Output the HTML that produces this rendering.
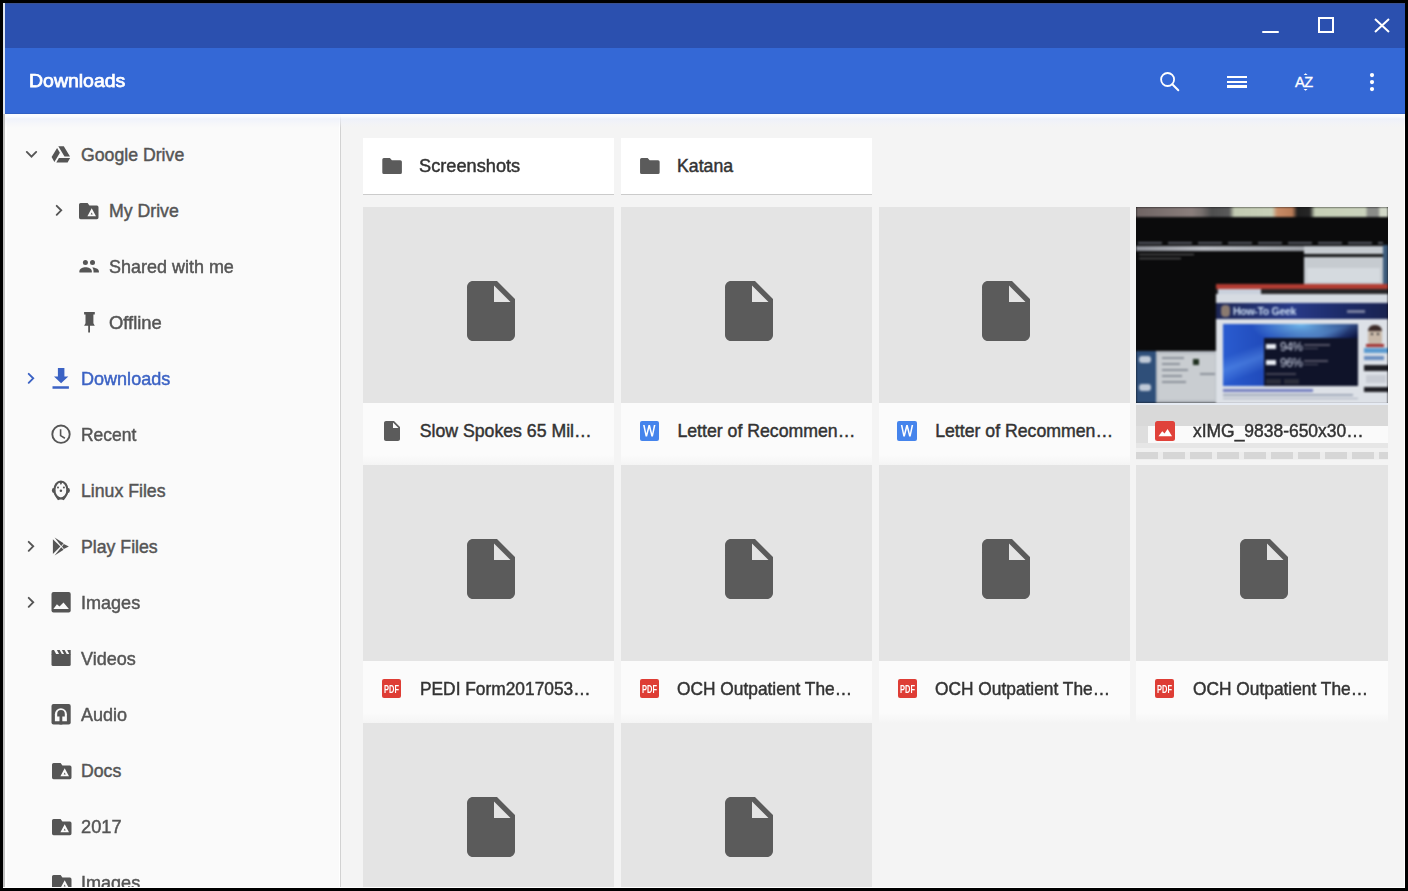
<!DOCTYPE html>
<html><head><meta charset="utf-8">
<style>
*{margin:0;padding:0;box-sizing:border-box}
html,body{width:1408px;height:891px;overflow:hidden;background:#000}
body{position:relative;font-family:"Liberation Sans",sans-serif;font-variant-ligatures:none}
.a{position:absolute}
svg.a{display:block;overflow:visible}
.t{white-space:nowrap;line-height:24px;height:24px;-webkit-text-stroke:0.45px currentColor}
</style></head><body>
<div class="a" style="left:3px;top:3px;width:1402px;height:885px;background:#f4f4f4"></div><div class="a" style="left:3px;top:3px;width:2px;height:885px;background:#c0c0c0"></div><div class="a" style="left:5px;top:3px;width:1400px;height:1px;background:#3a5190"></div><div class="a" style="left:3px;top:3px;width:2px;height:111px;background:#dfe5f0"></div><div class="a" style="left:5px;top:4px;width:1400px;height:44px;background:#2b50af"></div><div class="a" style="left:5px;top:48px;width:1400px;height:66px;background:#3468d6"></div><div class="a" style="left:5px;top:114px;width:335px;height:774px;background:#fafafa"></div><div class="a" style="left:339px;top:114px;width:1px;height:774px;background:#ffffff"></div><div class="a" style="left:5px;top:114px;width:2px;height:774px;background:#ffffff"></div><div class="a" style="left:340px;top:114px;width:1px;height:774px;background:#d2d2d2"></div><div class="a" style="left:3px;top:887px;width:1402px;height:1px;background:#ffffff"></div><div class="a" style="left:1404px;top:114px;width:1px;height:774px;background:#ffffff"></div><div class="a" style="left:5px;top:113px;width:1400px;height:1px;background:#3060c4"></div><div class="a" style="left:5px;top:114px;width:1400px;height:14px;background:linear-gradient(180deg,rgba(252,253,255,1) 0,rgba(250,252,255,.9) 2.5px,rgba(236,240,252,.7) 5px,rgba(240,242,250,.35) 10px,rgba(244,244,244,0) 14px)"></div><div class="a" style="left:1262.3px;top:30.8px;width:16.5px;height:2.4px;background:#ffffff;border-radius:1.2px"></div><div class="a" style="left:1318.3px;top:17.2px;width:15.9px;height:15.9px;border:2px solid #fff"></div><svg class="a" style="left:1374px;top:18px;width:16px;height:15px" viewBox="0 0 16 15"><path d="M1 1L15 14M15 1L1 14" stroke="#fff" stroke-width="2" fill="none"/></svg><div class="a t" style="left:29px;top:69.12px;font-size:19px;color:#ffffff;font-weight:400;-webkit-text-stroke:0.75px #fff;transform:scaleX(1.025);transform-origin:0 0">Downloads</div><svg class="a" style="left:1155px;top:65px;width:30px;height:30px" viewBox="1155 65 30 30"><circle cx="1167.6" cy="79.5" r="6.5" fill="none" stroke="#fff" stroke-width="1.8"/><path d="M1172.3 84.2L1178.3 90.2" stroke="#fff" stroke-width="2" stroke-linecap="round"/></svg><div class="a" style="left:1227px;top:75.6px;width:20.3px;height:2.9px;background:#fff"></div><div class="a" style="left:1227px;top:80.6px;width:20.3px;height:2.9px;background:#fff"></div><div class="a" style="left:1227px;top:85.4px;width:20.3px;height:2.9px;background:#fff"></div><div class="a" style="left:1295px;top:70px;font-size:14.6px;line-height:24px;color:#fff;white-space:nowrap;letter-spacing:-0.4px;-webkit-text-stroke:0.35px #fff">AZ</div><svg class="a" style="left:1300px;top:70px;width:12px;height:24px" viewBox="1300 70 12 24"><path d="M1303.6 75H1307.6L1305.6 73.2Z M1303.6 88.9H1307.6L1305.6 90.7Z" fill="#fff"/></svg><svg class="a" style="left:1362px;top:68px;width:20px;height:28px" viewBox="1362 68 20 28"><circle cx="1372" cy="75.1" r="2.1" fill="#fff"/><circle cx="1372" cy="82.1" r="2.1" fill="#fff"/><circle cx="1372" cy="89.1" r="2.1" fill="#fff"/></svg><svg class="a" style="left:18px;top:142px;width:28px;height:24px" viewBox="18 142 28 24"><path d="M26.8 151.9L31.5 156.6L36.2 151.9" fill="none" stroke="#555555" stroke-width="1.9" stroke-linecap="round" stroke-linejoin="miter"/></svg><svg class="a" style="left:45px;top:140px;width:31px;height:30px" viewBox="45 140 31 30"><path d="M58.3 146.2H63.8L70 156.6H64.5Z M57.1 148L59.9 152.8 54.4 162 51.6 157.1Z M58.9 157.9H70.1L67.6 162.4H56.3Z" fill="#555555"/></svg><div class="a t" style="left:81px;top:142.67px;font-size:17.7px;color:#555555;font-weight:400">Google Drive</div><svg class="a" style="left:50px;top:198px;width:20px;height:24px" viewBox="50 198 20 24"><path d="M56.7 205.8L61.2 210.3L56.7 214.8" fill="none" stroke="#555555" stroke-width="1.9" stroke-linecap="round" stroke-linejoin="miter"/></svg><svg class="a" style="left:76.2px;top:199.5px;width:26.0px;height:23.0px" viewBox="76.2 199.5 26.0 23.0"><path d="M80.8 202.5 H87.8 L89.60000000000001 205.1 H97.1 Q98.7 205.1 98.7 206.7 V217.1 Q98.7 218.7 97.1 218.7 H80.8 Q79.2 218.7 79.2 217.1 V204.1 Q79.2 202.5 80.8 202.5Z" fill="#555555"/><path d="M91.9 207.8 L96.2 215.8 H87.60000000000001 Z M91.9 212.10000000000002 L90.9 213.9 H92.9 Z" fill="#fafafa" fill-rule="evenodd"/></svg><div class="a t" style="left:109px;top:198.67px;font-size:17.7px;color:#555555;font-weight:400">My Drive</div><svg class="a" style="left:74px;top:252px;width:30px;height:30px" viewBox="74 252 30 30"><circle cx="85.4" cy="262.4" r="2.5" fill="#555555"/><circle cx="92.5" cy="262.4" r="2.5" fill="#555555"/><path d="M79.4 272.6V271.2C79.4 268.8 83 267.3 85.6 267.3S91.8 268.8 91.8 271.2V272.6Z" fill="#555555"/><path d="M92.2 267.5C95.5 267.6 98.9 269 98.9 271.2V272.6H93.5V271C93.5 269.6 93 268.4 92.2 267.5Z" fill="#555555"/></svg><div class="a t" style="left:109px;top:254.67px;font-size:17.7px;color:#555555;font-weight:400;transform:scaleX(1.016);transform-origin:0 0">Shared with me</div><svg class="a" style="left:74px;top:306px;width:30px;height:32px" viewBox="74 306 30 32"><path d="M84.1 312.1H94.8V314.6H93.4V323.2L94.8 325.8H90V332.6H88.2V325.8H84.1L85.5 323.2V314.6H84.1Z" fill="#555555"/></svg><div class="a t" style="left:109px;top:310.67px;font-size:17.7px;color:#555555;font-weight:400;transform:scaleX(1.04);transform-origin:0 0">Offline</div><svg class="a" style="left:22px;top:366px;width:20px;height:24px" viewBox="22 366 20 24"><path d="M28.7 373.8L33.2 378.3L28.7 382.8" fill="none" stroke="#3b62c4" stroke-width="1.9" stroke-linecap="round" stroke-linejoin="miter"/></svg><svg class="a" style="left:45px;top:362px;width:31px;height:32px" viewBox="45 362 31 32"><path d="M57.9 368.1H64.4V376.4H68.3L61.1 383.2 54 376.4H57.9Z M52.5 386.2H68.9V388.8H52.5Z" fill="#3b62c4"/></svg><div class="a t" style="left:81px;top:366.67px;font-size:17.7px;color:#3b62c4;font-weight:400;transform:scaleX(1.02);transform-origin:0 0">Downloads</div><svg class="a" style="left:45px;top:418px;width:31px;height:32px" viewBox="45 418 31 32"><circle cx="61" cy="434.2" r="8.7" fill="none" stroke="#555555" stroke-width="1.9"/><path d="M60.6 429.3V435.6L64.9 438.3" fill="none" stroke="#555555" stroke-width="1.6"/></svg><div class="a t" style="left:81px;top:422.67px;font-size:17.7px;color:#555555;font-weight:400;transform:scaleX(0.987);transform-origin:0 0">Recent</div><svg class="a" style="left:45px;top:474px;width:31px;height:32px" viewBox="45 474 31 32"><ellipse cx="60.9" cy="490" rx="6.5" ry="8.5" fill="none" stroke="#555555" stroke-width="2.1"/><ellipse cx="53.6" cy="490.5" rx="1.7" ry="2.4" fill="#555555"/><ellipse cx="68.2" cy="490.5" rx="1.7" ry="2.4" fill="#555555"/><circle cx="58" cy="487.5" r="1" fill="#555555"/><circle cx="63.9" cy="487.5" r="1" fill="#555555"/><circle cx="60.9" cy="490.8" r="1.25" fill="#555555"/><path d="M59 481.8L60.9 484.9 62.8 481.8Z" fill="#555555"/><path d="M55.8 497.2L58 500.3 60.9 499 63.8 500.3 66 497.2 63.5 496.8 60.9 498 58.3 496.8Z" fill="#555555"/></svg><div class="a t" style="left:81px;top:478.67px;font-size:17.7px;color:#555555;font-weight:400">Linux Files</div><svg class="a" style="left:22px;top:534px;width:20px;height:24px" viewBox="22 534 20 24"><path d="M28.7 541.8L33.2 546.3L28.7 550.8" fill="none" stroke="#555555" stroke-width="1.9" stroke-linecap="round" stroke-linejoin="miter"/></svg><svg class="a" style="left:45px;top:530px;width:31px;height:32px" viewBox="45 530 31 32"><path d="M52.9 539.3L60.4 546.6 52.9 554Z M54.6 537.6L63.6 543.3 61.2 545.9Z M54.6 555.5L63.6 549.8 61.2 547.2Z M63.8 544.1L68.9 546.6 63.8 549 62 546.6Z" fill="#555555"/></svg><div class="a t" style="left:81px;top:534.67px;font-size:17.7px;color:#555555;font-weight:400">Play Files</div><svg class="a" style="left:22px;top:590px;width:20px;height:24px" viewBox="22 590 20 24"><path d="M28.7 597.8L33.2 602.3L28.7 606.8" fill="none" stroke="#555555" stroke-width="1.9" stroke-linecap="round" stroke-linejoin="miter"/></svg><svg class="a" style="left:45px;top:586px;width:31px;height:32px" viewBox="45 586 31 32"><rect x="51.5" y="592.1" width="19.2" height="20.5" rx="2" fill="#555555"/><path d="M53.4 609.1L56.9 604.3 59.5 606.6 63.5 602.4 68.9 609.1Z" fill="#fafafa"/></svg><div class="a t" style="left:81px;top:590.67px;font-size:17.7px;color:#555555;font-weight:400;transform:scaleX(1.02);transform-origin:0 0">Images</div><svg class="a" style="left:45px;top:642px;width:31px;height:32px" viewBox="45 642 31 32"><path d="M51.5 654V664.4Q51.5 666 53.1 666H69.1Q70.7 666 70.7 664.4V654Z" fill="#555555"/><path d="M51.5 654.4V651.3Q51.5 649.9 52.9 649.9H54L56.4 654.4Z M56.9 649.9H59.7L62.1 654.4H59.3Z M61.9 649.9H64.6L67 654.4H64.3Z M67.1 649.9H70.7V654.4H69.5Z" fill="#555555"/></svg><div class="a t" style="left:81px;top:646.67px;font-size:17.7px;color:#555555;font-weight:400;transform:scaleX(1.02);transform-origin:0 0">Videos</div><svg class="a" style="left:45px;top:698px;width:31px;height:32px" viewBox="45 698 31 32"><rect x="51.5" y="704.1" width="19.2" height="20.5" rx="2" fill="#555555"/><path d="M54.9 721.2V714.2A6 6 0 0 1 66.9 714.2V721.2Z" fill="#fafafa"/><path d="M57.2 716.4V713.9A3.8 3.8 0 0 1 64.8 713.9V716.4H62.3V724.6H59.5V716.4Z" fill="#555555"/></svg><div class="a t" style="left:81px;top:702.67px;font-size:17.7px;color:#555555;font-weight:400;transform:scaleX(1.02);transform-origin:0 0">Audio</div><svg class="a" style="left:48.5px;top:759.5px;width:26.0px;height:23.0px" viewBox="48.5 759.5 26.0 23.0"><path d="M53.1 762.5 H60.1 L61.9 765.1 H69.4 Q71.0 765.1 71.0 766.7 V777.1 Q71.0 778.7 69.4 778.7 H53.1 Q51.5 778.7 51.5 777.1 V764.1 Q51.5 762.5 53.1 762.5Z" fill="#555555"/><path d="M64.2 767.8 L68.5 775.8 H59.900000000000006 Z M64.2 772.0999999999999 L63.2 773.9 H65.2 Z" fill="#fafafa" fill-rule="evenodd"/></svg><div class="a t" style="left:81px;top:758.67px;font-size:17.7px;color:#555555;font-weight:400">Docs</div><svg class="a" style="left:48.5px;top:815.5px;width:26.0px;height:23.0px" viewBox="48.5 815.5 26.0 23.0"><path d="M53.1 818.5 H60.1 L61.9 821.1 H69.4 Q71.0 821.1 71.0 822.7 V833.1 Q71.0 834.7 69.4 834.7 H53.1 Q51.5 834.7 51.5 833.1 V820.1 Q51.5 818.5 53.1 818.5Z" fill="#555555"/><path d="M64.2 823.8 L68.5 831.8 H59.900000000000006 Z M64.2 828.0999999999999 L63.2 829.9 H65.2 Z" fill="#fafafa" fill-rule="evenodd"/></svg><div class="a t" style="left:81px;top:814.67px;font-size:17.7px;color:#555555;font-weight:400;transform:scaleX(1.03);transform-origin:0 0">2017</div><svg class="a" style="left:48.5px;top:871.5px;width:26.0px;height:23.0px" viewBox="48.5 871.5 26.0 23.0"><path d="M53.1 874.5 H60.1 L61.9 877.1 H69.4 Q71.0 877.1 71.0 878.7 V889.1 Q71.0 890.7 69.4 890.7 H53.1 Q51.5 890.7 51.5 889.1 V876.1 Q51.5 874.5 53.1 874.5Z" fill="#555555"/><path d="M64.2 879.8 L68.5 887.8 H59.900000000000006 Z M64.2 884.0999999999999 L63.2 885.9 H65.2 Z" fill="#fafafa" fill-rule="evenodd"/></svg><div class="a t" style="left:81px;top:870.67px;font-size:17.7px;color:#555555;font-weight:400;transform:scaleX(1.02);transform-origin:0 0">Images</div><div class="a" style="left:363.0px;top:138px;width:251.4px;height:56px;background:#ffffff"></div><div class="a" style="left:363.0px;top:194px;width:251.4px;height:1px;background:#cbcbcb"></div><svg class="a" style="left:380px;top:156px;width:26px;height:22px" viewBox="380 156 26 22"><path d="M383.8 158 H389.90000000000003 L391.90000000000003 160.2 H400.3 Q401.90000000000003 160.2 401.90000000000003 161.8 V172.4 Q401.90000000000003 174 400.3 174 H383.90000000000003 Q382.3 174 382.3 172.4 V159.5 Q382.3 158 383.8 158Z" fill="#5b5b5b"/></svg><div class="a t" style="left:419.3px;top:153.77px;font-size:17.7px;color:#333333;font-weight:400;transform:scaleX(1.029);transform-origin:0 0">Screenshots</div><div class="a" style="left:620.8px;top:138px;width:251.4px;height:56px;background:#ffffff"></div><div class="a" style="left:620.8px;top:194px;width:251.4px;height:1px;background:#cbcbcb"></div><svg class="a" style="left:638px;top:156px;width:26px;height:22px" viewBox="638 156 26 22"><path d="M641.55 158 H647.65 L649.65 160.2 H658.05 Q659.65 160.2 659.65 161.8 V172.4 Q659.65 174 658.05 174 H641.65 Q640.05 174 640.05 172.4 V159.5 Q640.05 158 641.55 158Z" fill="#5b5b5b"/></svg><div class="a t" style="left:677.05px;top:153.77px;font-size:17.7px;color:#333333;font-weight:400">Katana</div><div class="a" style="left:363.0px;top:207px;width:251.4px;height:195.5px;background:#e4e4e4"></div><svg class="a" style="left:454.75px;top:275px;width:72px;height:72px" viewBox="0 0 24 24"><path d="M6 2c-1.1 0-1.99.9-1.99 2L4 20c0 1.1.89 2 1.99 2H18c1.1 0 2-.9 2-2V8l-6-6H6zm7 7V3.5L18.5 9H13z" fill="#5b5b5b"/></svg><div class="a" style="left:363.0px;top:402.5px;width:251.4px;height:62.5px;background:linear-gradient(180deg,#fbfbfb 0,#fbfbfb 52px,#f4f4f4 62.5px)"></div><svg class="a" style="left:379.9px;top:419px;width:24px;height:24px" viewBox="0 0 24 24"><path d="M6 2c-1.1 0-1.99.9-1.99 2L4 20c0 1.1.89 2 1.99 2H18c1.1 0 2-.9 2-2V8l-6-6H6zm7 7V3.5L18.5 9H13z" fill="#5b5b5b"/></svg><div class="a t" style="left:419.7px;top:418.77px;font-size:17.7px;color:#333333;font-weight:400">Slow Spokes 65 Mil…</div><div class="a" style="left:620.8px;top:207px;width:251.4px;height:195.5px;background:#e4e4e4"></div><svg class="a" style="left:712.5px;top:275px;width:72px;height:72px" viewBox="0 0 24 24"><path d="M6 2c-1.1 0-1.99.9-1.99 2L4 20c0 1.1.89 2 1.99 2H18c1.1 0 2-.9 2-2V8l-6-6H6zm7 7V3.5L18.5 9H13z" fill="#5b5b5b"/></svg><div class="a" style="left:620.8px;top:402.5px;width:251.4px;height:62.5px;background:linear-gradient(180deg,#fbfbfb 0,#fbfbfb 52px,#f4f4f4 62.5px)"></div><div class="a" style="left:639.55px;top:421.3px;width:19.3px;height:19.3px;background:#4584ec;border-radius:2px"></div><svg class="a" style="left:639px;top:421px;width:21px;height:21px" viewBox="639 421 21 21"><path d="M643.05 424.90000000000003L645.55 436.40000000000003H647.15L649.25 428.2L651.3499999999999 436.40000000000003H652.9499999999999L655.4499999999999 424.90000000000003H653.8499999999999L652.15 433.5L650.05 424.90000000000003H648.4499999999999L646.3499999999999 433.5L644.65 424.90000000000003Z" fill="#fff"/></svg><div class="a t" style="left:677.45px;top:418.77px;font-size:17.7px;color:#333333;font-weight:400">Letter of Recommen…</div><div class="a" style="left:878.6px;top:207px;width:251.4px;height:195.5px;background:#e4e4e4"></div><svg class="a" style="left:970.25px;top:275px;width:72px;height:72px" viewBox="0 0 24 24"><path d="M6 2c-1.1 0-1.99.9-1.99 2L4 20c0 1.1.89 2 1.99 2H18c1.1 0 2-.9 2-2V8l-6-6H6zm7 7V3.5L18.5 9H13z" fill="#5b5b5b"/></svg><div class="a" style="left:878.6px;top:402.5px;width:251.4px;height:62.5px;background:linear-gradient(180deg,#fbfbfb 0,#fbfbfb 52px,#f4f4f4 62.5px)"></div><div class="a" style="left:897.3px;top:421.3px;width:19.3px;height:19.3px;background:#4584ec;border-radius:2px"></div><svg class="a" style="left:897px;top:421px;width:21px;height:21px" viewBox="897 421 21 21"><path d="M900.8 424.90000000000003L903.3 436.40000000000003H904.9L907.0 428.2L909.0999999999999 436.40000000000003H910.6999999999999L913.1999999999999 424.90000000000003H911.5999999999999L909.9 433.5L907.8 424.90000000000003H906.1999999999999L904.0999999999999 433.5L902.4 424.90000000000003Z" fill="#fff"/></svg><div class="a t" style="left:935.2px;top:418.77px;font-size:17.7px;color:#333333;font-weight:400">Letter of Recommen…</div><div class="a" style="left:363.0px;top:465px;width:251.4px;height:195.5px;background:#e4e4e4"></div><svg class="a" style="left:454.75px;top:533px;width:72px;height:72px" viewBox="0 0 24 24"><path d="M6 2c-1.1 0-1.99.9-1.99 2L4 20c0 1.1.89 2 1.99 2H18c1.1 0 2-.9 2-2V8l-6-6H6zm7 7V3.5L18.5 9H13z" fill="#5b5b5b"/></svg><div class="a" style="left:363.0px;top:660.5px;width:251.4px;height:62.5px;background:linear-gradient(180deg,#fbfbfb 0,#fbfbfb 52px,#f4f4f4 62.5px)"></div><div class="a" style="left:382.1px;top:679.4px;width:19px;height:19px;background:#de3d35;border-radius:2px"></div><div class="a" style="left:372.1px;top:681.9px;width:39px;height:14px;line-height:14px;font-size:10.6px;font-weight:700;color:#fff;text-align:center;transform:scaleX(0.7)">PDF</div><div class="a t" style="left:419.7px;top:676.77px;font-size:17.7px;color:#333333;font-weight:400;transform:scaleX(0.98);transform-origin:0 0">PEDI Form2017053…</div><div class="a" style="left:620.8px;top:465px;width:251.4px;height:195.5px;background:#e4e4e4"></div><svg class="a" style="left:712.5px;top:533px;width:72px;height:72px" viewBox="0 0 24 24"><path d="M6 2c-1.1 0-1.99.9-1.99 2L4 20c0 1.1.89 2 1.99 2H18c1.1 0 2-.9 2-2V8l-6-6H6zm7 7V3.5L18.5 9H13z" fill="#5b5b5b"/></svg><div class="a" style="left:620.8px;top:660.5px;width:251.4px;height:62.5px;background:linear-gradient(180deg,#fbfbfb 0,#fbfbfb 52px,#f4f4f4 62.5px)"></div><div class="a" style="left:639.85px;top:679.4px;width:19px;height:19px;background:#de3d35;border-radius:2px"></div><div class="a" style="left:629.85px;top:681.9px;width:39px;height:14px;line-height:14px;font-size:10.6px;font-weight:700;color:#fff;text-align:center;transform:scaleX(0.7)">PDF</div><div class="a t" style="left:677.45px;top:676.77px;font-size:17.7px;color:#333333;font-weight:400;transform:scaleX(0.98);transform-origin:0 0">OCH Outpatient The…</div><div class="a" style="left:878.6px;top:465px;width:251.4px;height:195.5px;background:#e4e4e4"></div><svg class="a" style="left:970.25px;top:533px;width:72px;height:72px" viewBox="0 0 24 24"><path d="M6 2c-1.1 0-1.99.9-1.99 2L4 20c0 1.1.89 2 1.99 2H18c1.1 0 2-.9 2-2V8l-6-6H6zm7 7V3.5L18.5 9H13z" fill="#5b5b5b"/></svg><div class="a" style="left:878.6px;top:660.5px;width:251.4px;height:62.5px;background:linear-gradient(180deg,#fbfbfb 0,#fbfbfb 52px,#f4f4f4 62.5px)"></div><div class="a" style="left:897.6px;top:679.4px;width:19px;height:19px;background:#de3d35;border-radius:2px"></div><div class="a" style="left:887.6px;top:681.9px;width:39px;height:14px;line-height:14px;font-size:10.6px;font-weight:700;color:#fff;text-align:center;transform:scaleX(0.7)">PDF</div><div class="a t" style="left:935.2px;top:676.77px;font-size:17.7px;color:#333333;font-weight:400;transform:scaleX(0.98);transform-origin:0 0">OCH Outpatient The…</div><div class="a" style="left:1136.2px;top:465px;width:251.4px;height:195.5px;background:#e4e4e4"></div><svg class="a" style="left:1228.0px;top:533px;width:72px;height:72px" viewBox="0 0 24 24"><path d="M6 2c-1.1 0-1.99.9-1.99 2L4 20c0 1.1.89 2 1.99 2H18c1.1 0 2-.9 2-2V8l-6-6H6zm7 7V3.5L18.5 9H13z" fill="#5b5b5b"/></svg><div class="a" style="left:1136.2px;top:660.5px;width:251.4px;height:62.5px;background:linear-gradient(180deg,#fbfbfb 0,#fbfbfb 52px,#f4f4f4 62.5px)"></div><div class="a" style="left:1155.35px;top:679.4px;width:19px;height:19px;background:#de3d35;border-radius:2px"></div><div class="a" style="left:1145.35px;top:681.9px;width:39px;height:14px;line-height:14px;font-size:10.6px;font-weight:700;color:#fff;text-align:center;transform:scaleX(0.7)">PDF</div><div class="a t" style="left:1192.95px;top:676.77px;font-size:17.7px;color:#333333;font-weight:400;transform:scaleX(0.98);transform-origin:0 0">OCH Outpatient The…</div><div class="a" style="left:363.0px;top:723px;width:251.4px;height:195.5px;background:#e4e4e4"></div><svg class="a" style="left:454.75px;top:791px;width:72px;height:72px" viewBox="0 0 24 24"><path d="M6 2c-1.1 0-1.99.9-1.99 2L4 20c0 1.1.89 2 1.99 2H18c1.1 0 2-.9 2-2V8l-6-6H6zm7 7V3.5L18.5 9H13z" fill="#5b5b5b"/></svg><div class="a" style="left:620.8px;top:723px;width:251.4px;height:195.5px;background:#e4e4e4"></div><svg class="a" style="left:712.5px;top:791px;width:72px;height:72px" viewBox="0 0 24 24"><path d="M6 2c-1.1 0-1.99.9-1.99 2L4 20c0 1.1.89 2 1.99 2H18c1.1 0 2-.9 2-2V8l-6-6H6zm7 7V3.5L18.5 9H13z" fill="#5b5b5b"/></svg><div class="a" style="left:1136.2px;top:207px;width:251.4px;height:196px;overflow:hidden;background:#0b0b0c"><div class="a" style="left:-1136.2px;top:-207px;width:1408px;height:891px;filter:blur(0.8px)"><div class="a" style="left:1136px;top:207px;width:252px;height:10px;background:linear-gradient(90deg,#6f6463 0,#8a7e7c 22%,#77706e 26%,#4e4e4e 30%,#5a5a5a 37%,#c2cab2 39%,#c8d0b8 54%,#c88c66 56%,#b87c58 62%,#202020 64%,#262626 69%,#c6cfb6 71%,#cad2bc 91%,#8a8c88 92%,#8a8c88 96%,#d2d8c8 97%)"></div><div class="a" style="left:1138px;top:242px;width:245px;height:1.5px;background:repeating-linear-gradient(90deg,#5a5d65 0,#5a5d65 24px,transparent 24px,transparent 30px)"></div><div class="a" style="left:1136px;top:246.3px;width:168px;height:5px;background:linear-gradient(90deg,#8d9097,#b9bcc2 40%,#9ea2a8)"></div><div class="a" style="left:1139px;top:253.5px;width:55px;height:1px;background:#6b6b6b"></div><div class="a" style="left:1139px;top:257.5px;width:42px;height:1px;background:#6b6b6b"></div><div class="a" style="left:1304px;top:245.6px;width:79px;height:38.4px;background:#c6cbd0"></div><div class="a" style="left:1304px;top:254.3px;width:79px;height:3.1px;background:#141516"></div><div class="a" style="left:1307px;top:268px;width:73px;height:14px;background:#d5dadf"></div><div class="a" style="left:1383px;top:245px;width:5px;height:39px;background:#3d5c7c"></div><div class="a" style="left:1136px;top:351.4px;width:81.5px;height:51.6px;background:#b9bec4"></div><div class="a" style="left:1136px;top:351.4px;width:20px;height:51.6px;background:#2f4f79"></div><div class="a" style="left:1158px;top:354px;width:57px;height:46px;background:#c9cdd1"></div><div class="a" style="left:1193px;top:359px;width:6px;height:6px;background:#203020"></div><div class="a" style="left:1162px;top:357px;width:22px;height:1.5px;background:#8a9098"></div><div class="a" style="left:1162px;top:363px;width:18px;height:1.5px;background:#8a9098"></div><div class="a" style="left:1162px;top:369px;width:26px;height:1.5px;background:#8a9098"></div><div class="a" style="left:1162px;top:375px;width:20px;height:1.5px;background:#8a9098"></div><div class="a" style="left:1162px;top:381px;width:24px;height:1.5px;background:#8a9098"></div><div class="a" style="left:1200px;top:373px;width:15px;height:1.5px;background:#8a9098"></div><div class="a" style="left:1139px;top:356px;width:12px;height:7px;background:#c0cad8;border-radius:3px"></div><div class="a" style="left:1139px;top:384px;width:12px;height:7px;background:#c0cad8;border-radius:3px"></div><div class="a" style="left:1216.4px;top:283.5px;width:171.6px;height:120px;background:#dde1e7"></div><div class="a" style="left:1216.4px;top:283.5px;width:171.6px;height:5.1px;background:#b23c32"></div><div class="a" style="left:1216.4px;top:288.6px;width:171.6px;height:5.8px;background:#262628"></div><div class="a" style="left:1218px;top:289px;width:43px;height:5.4px;background:#c9d0dc"></div><div class="a" style="left:1216.4px;top:294.4px;width:171.6px;height:8.3px;background:#d6dbe2"></div><div class="a" style="left:1216.4px;top:302.7px;width:171.6px;height:16.5px;background:linear-gradient(90deg,#1d2654,#283a88 45%,#1c2a66 75%,#1a2350)"></div><div class="a" style="left:1233px;top:304px;font-size:10.5px;line-height:14px;color:#cfe0f6;font-weight:700;white-space:nowrap;letter-spacing:-0.3px">How-To Geek</div><div class="a" style="left:1221px;top:305px;width:9px;height:12px;background:#8a7a70;border-radius:4px"></div><div class="a" style="left:1347px;top:310px;width:18px;height:3px;background:#7a80a0"></div><div class="a" style="left:1223.4px;top:324.3px;width:135px;height:61.4px;background:radial-gradient(ellipse 50px 22px at 58% 0%,rgba(130,210,255,.85),rgba(60,120,230,0)),linear-gradient(160deg,rgba(255,255,255,0) 30%,rgba(120,180,255,.35) 42%,rgba(255,255,255,0) 55%),linear-gradient(90deg,#2a5cd0 0%,#1f48b8 35%,#142a80 65%,#0c1440 100%)"></div><div class="a" style="left:1263.7px;top:338.4px;width:94.6px;height:47.3px;background:#0f1329"></div><div class="a" style="left:1266px;top:344px;width:10px;height:5px;background:#e8ecf4"></div><div class="a" style="left:1266px;top:360px;width:10px;height:5px;background:#e8ecf4"></div><div class="a" style="left:1280px;top:340.5px;font-size:12px;line-height:12px;color:#d0d6e8;white-space:nowrap;letter-spacing:-0.5px">94%</div><div class="a" style="left:1280px;top:356.5px;font-size:12px;line-height:12px;color:#d0d6e8;white-space:nowrap;letter-spacing:-0.5px">96%</div><div class="a" style="left:1304px;top:344px;width:26px;height:1.5px;background:#556"></div><div class="a" style="left:1304px;top:347.5px;width:14px;height:1.5px;background:#556"></div><div class="a" style="left:1304px;top:360px;width:24px;height:1.5px;background:#556"></div><div class="a" style="left:1304px;top:363.5px;width:14px;height:1.5px;background:#556"></div><div class="a" style="left:1266px;top:373px;width:30px;height:1.5px;background:#445"></div><div class="a" style="left:1266px;top:379px;width:15px;height:5px;background:#2a2d3a"></div><div class="a" style="left:1284px;top:379px;width:15px;height:5px;background:#2a2d3a"></div><div class="a" style="left:1368px;top:325px;width:14px;height:20px;background:#c8b8a8;border-radius:7px 7px 4px 4px"></div><div class="a" style="left:1368px;top:325px;width:14px;height:6px;background:#3a2a28;border-radius:7px 7px 0 0"></div><div class="a" style="left:1371px;top:333px;width:2px;height:2px;background:#333"></div><div class="a" style="left:1377px;top:333px;width:2px;height:2px;background:#333"></div><div class="a" style="left:1366px;top:344px;width:18px;height:2.5px;background:#a03030"></div><div class="a" style="left:1364px;top:348px;width:24px;height:5px;background:#5a9ad0"></div><div class="a" style="left:1364px;top:356px;width:20px;height:4px;background:#6a8ec0"></div><div class="a" style="left:1364px;top:365px;width:24px;height:6px;background:#1e1e24"></div><div class="a" style="left:1364px;top:387px;width:24px;height:5px;background:#1e1e24"></div><div class="a" style="left:1366px;top:375px;width:20px;height:8px;background:#c8ccd4"></div><div class="a" style="left:1223px;top:389px;width:90px;height:3px;background:#7580c0"></div><div class="a" style="left:1223px;top:394px;width:130px;height:1.5px;background:#a0a8b8"></div><div class="a" style="left:1223px;top:397.5px;width:135px;height:1.5px;background:#a8afbc"></div></div></div><div class="a" style="left:1136.2px;top:403px;width:251.4px;height:2px;background:#e6ebf3"></div><div class="a" style="left:1136.2px;top:405px;width:251.4px;height:21px;background:#d9d9d9"></div><div class="a" style="left:1136.2px;top:426px;width:251.4px;height:17px;background:#dedede"></div><div class="a" style="left:1148.2px;top:426px;width:239.39999999999986px;height:17px;background:#fafafa"></div><div class="a" style="left:1136.2px;top:443px;width:251.4px;height:5px;background:#e6e6e6"></div><div class="a" style="left:1136.2px;top:448px;width:251.4px;height:4px;background:#f0f0f0"></div><div class="a" style="left:1136.2px;top:452px;width:251.4px;height:7px;background:repeating-linear-gradient(90deg,#d6d6d6 0,#d6d6d6 22px,#ececec 22px,#ececec 27px)"></div><div class="a" style="left:1136.2px;top:459px;width:251.4px;height:1px;background:#efefef"></div><div class="a" style="left:1155.25px;top:420.6px;width:20px;height:20px;background:#e0423a;border-radius:2.5px"></div><svg class="a" style="left:1155px;top:420px;width:22px;height:22px" viewBox="1155 420 22 22"><path d="M1158.45 436.20000000000005L1162.25 431.20000000000005L1164.55 433.40000000000003L1167.55 429.0L1172.05 436.20000000000005Z" fill="#fff"/></svg><div class="a t" style="left:1192.95px;top:419.07px;font-size:17.7px;color:#333333;font-weight:400;transform:scaleX(0.986);transform-origin:0 0">xIMG_9838-650x30…</div><div class="a" style="left:5px;top:887px;width:1400px;height:1px;background:#ffffff"></div><div class="a" style="left:0px;top:888px;width:1408px;height:3px;background:#000000"></div><div class="a" style="left:0px;top:0px;width:1408px;height:3px;background:#000000"></div><div class="a" style="left:0px;top:0px;width:3px;height:891px;background:#000000"></div><div class="a" style="left:1405px;top:0px;width:3px;height:891px;background:#000000"></div></body></html>
